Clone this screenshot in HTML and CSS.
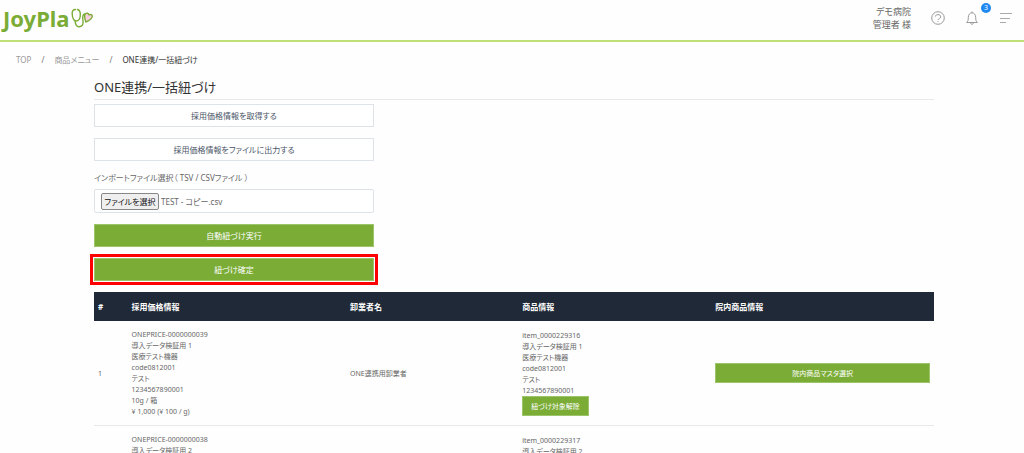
FILE: index.html
```html
<!DOCTYPE html>
<html lang="ja">
<head>
  <meta charset="UTF-8">
  <meta name="viewport" content="width=device-width, initial-scale=1">
  <title>ONE連携/一括紐づけ</title>
  <link rel="stylesheet" href="styles.css">
</head>
<body>
  <header class="header">
    <a class="logo" href="#">
      <span class="logo-text">JoyPla</span>
      <svg width="23" height="21" viewBox="0 0 23 21" fill="none" stroke="#7aac36" stroke-width="1.4" stroke-linecap="round" stroke-linejoin="round">
        <path d="M4.500 1.500C2 1.500 1 3 1.200 6c.2 4 1.800 7 4.300 7S9.500 10 9.300 6c-.1-2.500-.8-4-2.800-4.500"/>
        <path d="M4 12.500c.3 4.500 1.800 6.500 4.500 6.200 3-.3 4-2.700 3.500-5.700-.5-3-.8-6 1.500-7"/>
        <path d="M14.800 14c-1-3-2-6-.6-8 1.500-1.500 3.300-.8 3.800.8 1.500-.8 3.500-.2 3.300 1.700-.3 2-3 4-6.500 5.500z" fill="#f7cfdc"/>
      </svg>
    </a>
    <div class="header-menu">
      <div class="user">デモ病院<br>管理者 様</div>
      <button class="icon-button" type="button" aria-label="ヘルプ">
        <svg width="14" height="14" viewBox="0 0 14 14" fill="none" stroke="#999">
          <circle cx="7" cy="7" r="6.300"/>
          <path d="M4.300 5.600C4.600 4.200 5.600 3.600 7 3.600c1.500 0 2.700.9 2.700 2.300 0 1.800-2.500 1.700-2.700 3.100M7 10v.8"/>
        </svg>
      </button>
      <button class="icon-button" type="button" aria-label="お知らせ">
        <svg width="14" height="14" viewBox="0 0 14 14" fill="none" stroke="#999">
          <path d="M1.500 11.500c1.500-1 1.800-2.500 1.800-5C3.300 3.500 5 1.800 7 1.800s3.700 1.700 3.700 4.700c0 2.500.3 4 1.800 5zM5.500 11.500c0 2.300 3 2.300 3 0M7 .5v1.300"/>
        </svg>
        <span class="badge">3</span>
      </button>
      <button class="icon-button" type="button" aria-label="メニュー">
        <svg width="14" height="14" viewBox="0 0 14 14" fill="none" stroke="#aaa">
          <path d="M1 2.500h12M1 7.500h10M1 11.500h6"/>
        </svg>
      </button>
    </div>
  </header>

  <nav class="breadcrumb">
    <a href="#">TOP</a>
    <span>/</span>
    <a href="#">商品メニュー</a>
    <span>/</span>
    <span class="current">ONE連携/一括紐づけ</span>
  </nav>

  <main class="main">
    <h1>ONE連携/一括紐づけ</h1>

    <div class="actions">
      <button class="button button-default" type="button">採用価格情報を取得する</button>
      <button class="button button-default" type="button">採用価格情報をファイルに出力する</button>
      <div class="field">
        <label for="importFile">インポートファイル選択（ TSV / CSVファイル ）</label>
        <label class="file-box" for="importFile">
          <input type="file" id="importFile" accept=".tsv,.csv">
          <span class="file-button">ファイルを選択</span>
          <span>TEST - コピー.csv</span>
        </label>
      </div>
      <button class="button button-primary" type="button">自動紐づけ実行</button>
      <button class="button button-primary marked" type="button">紐づけ確定</button>
    </div>

    <table class="table">
      <thead>
        <tr>
          <th class="col-no">#</th>
          <th class="col-price">採用価格情報</th>
          <th class="col-dealer">卸業者名</th>
          <th class="col-item">商品情報</th>
          <th>院内商品情報</th>
        </tr>
      </thead>
      <tbody>
        <tr>
          <td>1</td>
          <td>ONEPRICE-0000000039<br>導入データ検証用 1<br>医療テスト機器<br>code0812001<br>テスト<br>1234567890001<br>10g / 箱<br>¥ 1,000 (¥ 100 / g)</td>
          <td>ONE連携用卸業者</td>
          <td>
            item_0000229316<br>導入データ検証用 1<br>医療テスト機器<br>code0812001<br>テスト<br>1234567890001
            <button class="button button-primary button-small" type="button">紐づけ対象解除</button>
          </td>
          <td><button class="button button-primary button-row" type="button">院内商品マスタ選択</button></td>
        </tr>
        <tr>
          <td>2</td>
          <td>ONEPRICE-0000000038<br>導入データ検証用 2<br>医療テスト機器<br>code0812002<br>テスト<br>1234567890002<br>10g / 箱<br>¥ 1,000 (¥ 100 / g)</td>
          <td>ONE連携用卸業者</td>
          <td>
            item_0000229317<br>導入データ検証用 2<br>医療テスト機器<br>code0812002<br>テスト<br>1234567890002
            <button class="button button-primary button-small" type="button">紐づけ対象解除</button>
          </td>
          <td><button class="button button-primary button-row" type="button">院内商品マスタ選択</button></td>
        </tr>
      </tbody>
    </table>
  </main>
</body>
</html>
```
FILE: styles.css
```css
* {
  box-sizing: border-box;
}

html {
  scrollbar-width: none;
}

body {
  margin: 0;
  font-family: "Noto Sans", "Noto Sans CJK JP", sans-serif;
  font-size: 8px;
  line-height: 11px;
  font-feature-settings: "palt";
  color: #666;
  background: #fefefe;
}

button {
  font: inherit;
  font-feature-settings: inherit;
  cursor: pointer;
}

a {
  color: inherit;
  text-decoration: none;
}

.header {
  display: flex;
  justify-content: space-between;
  align-items: center;
  height: 42px;
  padding: 0 11px 4px 3px;
  border-bottom: 2px solid #bfe077;
}

.logo {
  display: flex;
  align-items: center;
  gap: 1px;
}

.logo-text {
  font-size: 22px;
  line-height: 32px;
  font-weight: bold;
  color: #7aac36;
}

.header-menu {
  display: flex;
  align-items: center;
  gap: 20px;
}

.user {
  font-size: 9px;
  line-height: 13px;
  text-align: right;
}

.icon-button {
  position: relative;
  display: flex;
  padding: 0;
  border: 0;
  background: none;
}

.badge {
  position: absolute;
  top: -8px;
  right: -12px;
  width: 10px;
  height: 10px;
  border-radius: 50%;
  background: #1e87f0;
  color: #fff;
  font-size: 7px;
  line-height: 10px;
  text-align: center;
}

.breadcrumb {
  display: flex;
  gap: 10px;
  padding: 12px 16px 0;
  color: #777;
}

.breadcrumb a {
  color: #999;
}

.breadcrumb .current {
  color: #333;
}

.main {
  padding: 12px 90px 0 94px;
}

h1 {
  margin: 0 0 4px;
  padding-bottom: 2px;
  border-bottom: 1px solid #e8e8e4;
  font-size: 13px;
  line-height: 20px;
  font-weight: normal;
  color: #333;
}

.actions {
  display: grid;
  gap: 11px;
  width: 33.333%;
}

.button {
  height: 23px;
  padding: 0 8px;
  border: 1px solid #dee3e9;
  background: #fff;
  color: #4a5568;
}

.button-primary {
  border-color: #9cc46a;
  background: #7aac36;
  color: #fff;
}

.marked {
  outline: 3px solid #f00;
  outline-offset: 1px;
}

.field {
  display: grid;
  gap: 6px;
}

.file-box {
  display: flex;
  align-items: center;
  gap: 2px;
  height: 24px;
  padding: 0 6px;
  border: 1px solid #dee3e9;
  border-radius: 2px;
  background: #fff;
}

.file-box input {
  position: absolute;
  width: 1px;
  height: 1px;
  opacity: 0;
}

.file-button {
  padding: 2px 0;
  width: 58px;
  text-align: center;
  border: 1px solid #888;
  border-radius: 2px;
  background: #efefef;
  color: #111;
}

.table {
  width: 100%;
  margin-top: 11px;
  table-layout: fixed;
  border-collapse: collapse;
}

.table th {
  height: 29px;
  padding: 0 4px;
  background: #1f2937;
  color: #fff;
  font-weight: bold;
  text-align: left;
}

.table td {
  padding: 8px 4px;
  border-bottom: 1px solid #e8e8e8;
  font-size: 7px;
}

.col-no {
  width: 4%;
}

.col-price {
  width: 26%;
}

.col-dealer {
  width: 20.5%;
}

.col-item {
  width: 23%;
}

.button-small,
.button-row {
  display: block;
  height: 20px;
}

.button-row {
  width: 100%;
}
```
